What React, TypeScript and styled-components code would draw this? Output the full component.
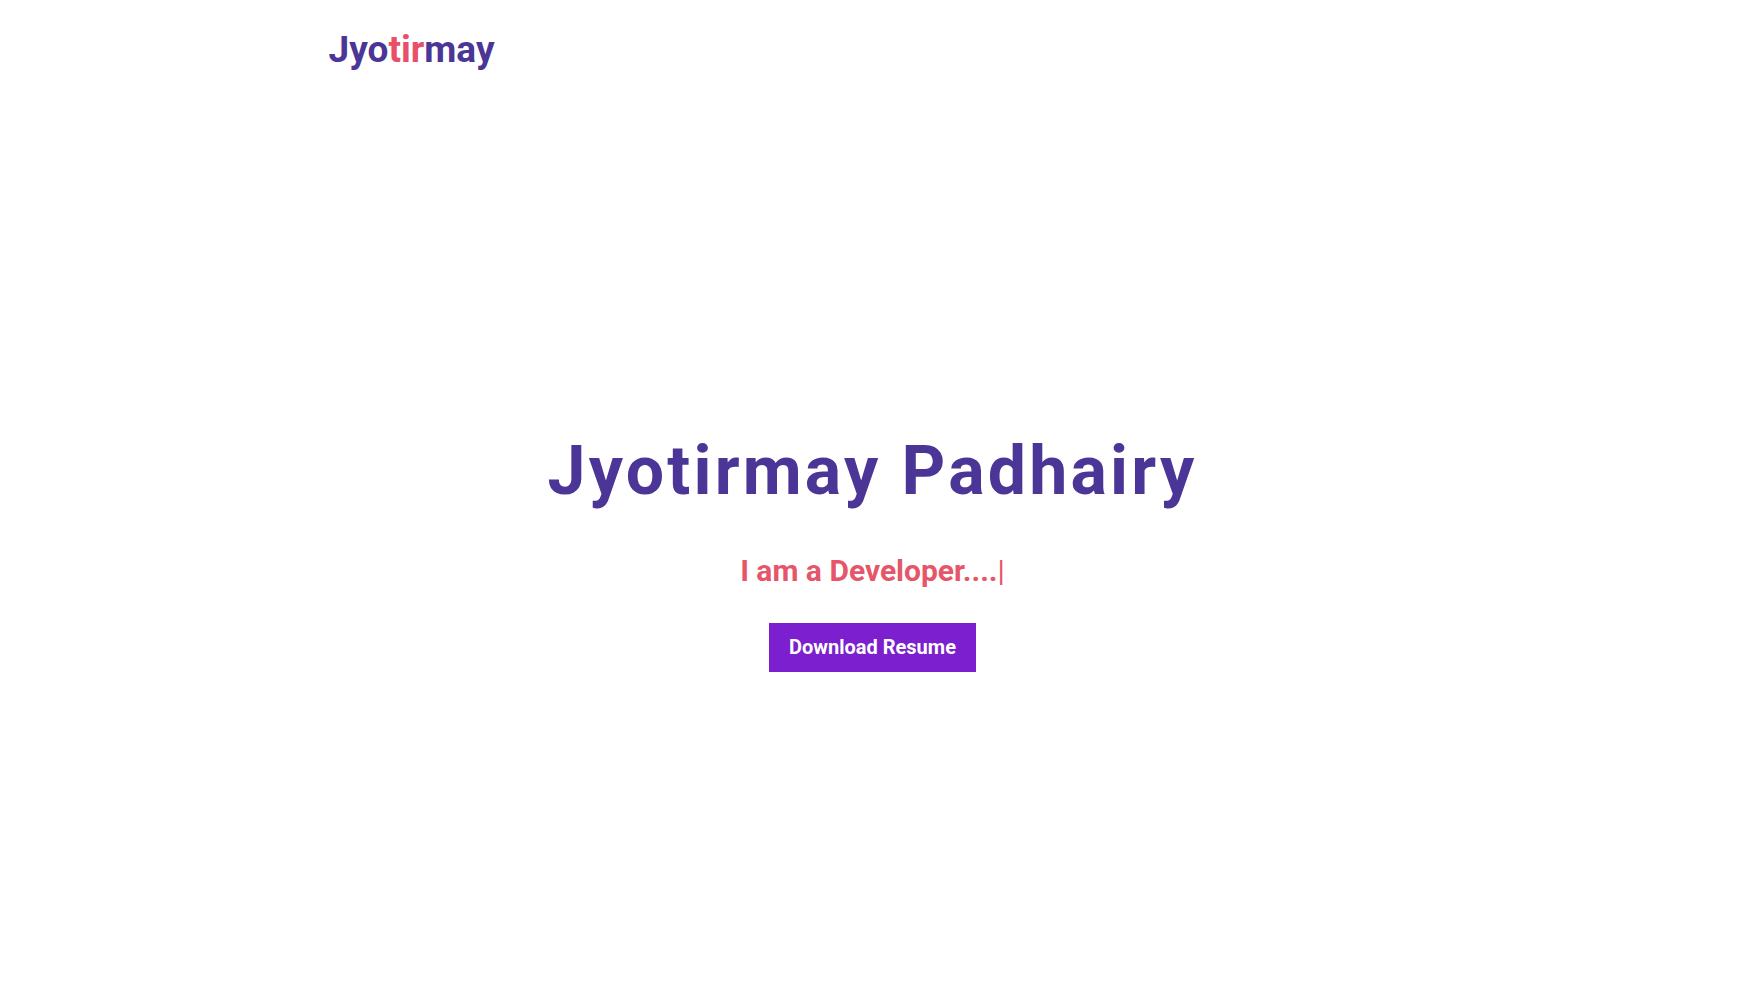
import React from "react";
import styled, { createGlobalStyle } from "styled-components";

const Global = createGlobalStyle`
  * { box-sizing: border-box; }
  body {
    margin: 0;
    background: #ffffff;
    font-family: Roboto, "Liberation Sans", Arial, sans-serif;
  }
`;

const Page = styled.div`
  min-height: 100vh;
  display: flex;
  flex-direction: column;
`;

const Header = styled.header`
  width: 1100px;
  margin: 0 auto;
  padding-top: 28px;
  display: flex;
  align-items: center;
`;

const Logo = styled.a`
  font-size: 37px;
  line-height: 1.2;
  font-weight: 700;
  color: #4b3596;
  text-decoration: none;
`;

const Accent = styled.span`
  color: #e8506a;
`;

const Hero = styled.section`
  display: flex;
  flex-direction: column;
  align-items: center;
  padding: 359px 12px 0 0;
`;

const Title = styled.h1`
  margin: 0;
  font-size: 68px;
  line-height: 1.2;
  font-weight: 700;
  letter-spacing: 3.2px;
  color: #4b3596;
`;

const Subtitle = styled.h2`
  margin: 40px 0 0;
  font-size: 30px;
  line-height: 1.2;
  font-weight: 700;
  color: #e5566a;
`;

const Cursor = styled.span`
  font-weight: 400;
`;

const Button = styled.a`
  margin-top: 34px;
  display: inline-flex;
  align-items: center;
  justify-content: center;
  height: 49px;
  padding: 0 20px;
  background: #7b1fcf;
  color: #ffffff;
  font-size: 20px;
  font-weight: 700;
  text-decoration: none;
`;

export default function App() {
  return (
    <Page>
      <Global />
      <Header>
        <Logo href="#">
          Jyo<Accent>tir</Accent>may
        </Logo>
      </Header>
      <Hero>
        <Title>Jyotirmay Padhairy</Title>
        <Subtitle>
          I am a Developer....<Cursor>|</Cursor>
        </Subtitle>
        <Button href="#">Download Resume</Button>
      </Hero>
    </Page>
  );
}
